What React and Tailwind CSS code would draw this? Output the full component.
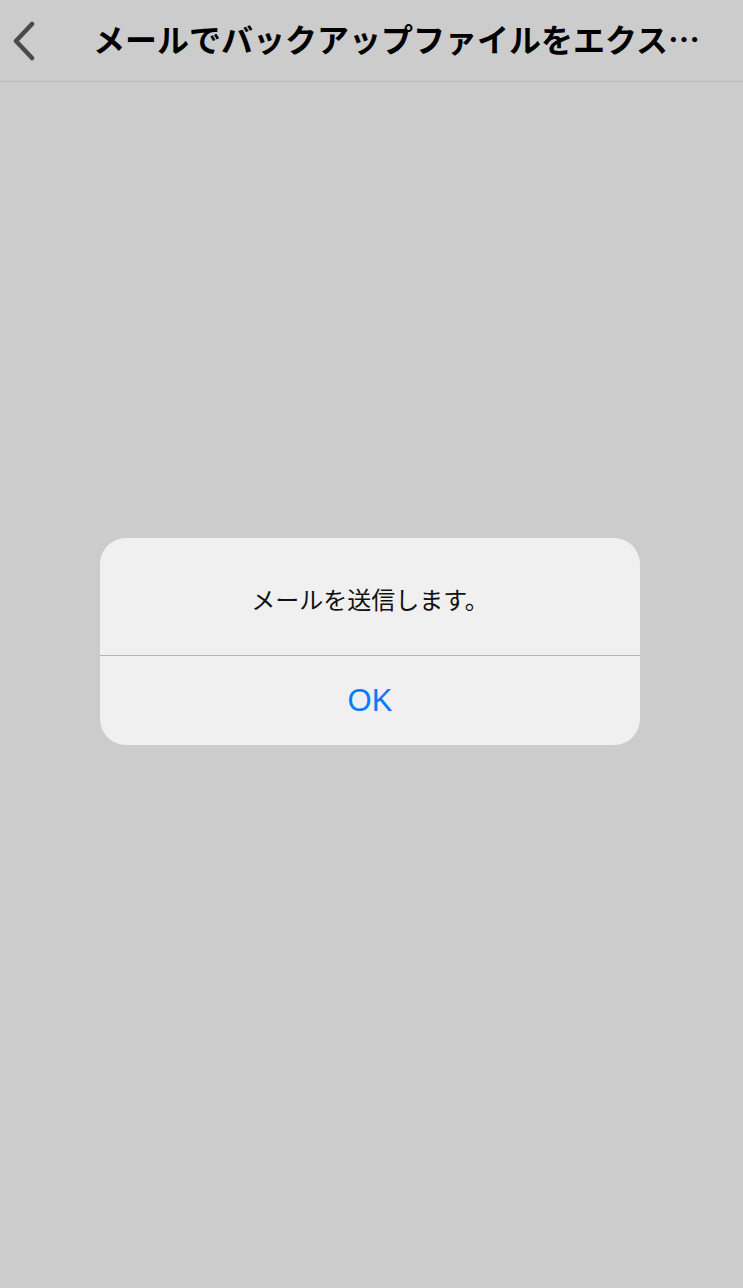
import React from "react";

export default function App() {
  return (
    <div
      className="relative w-[743px] h-[1288px] bg-[#cccccc] overflow-hidden"
      style={{ fontFamily: '"Noto Sans CJK JP", "Noto Sans", sans-serif' }}
    >
      <header className="h-[82px] border-b border-[#b9b9b9] flex items-center relative">
        <div className="w-[60px] h-full flex items-center pl-[10px]">
          <svg width="28" height="40" viewBox="0 0 28 40" fill="none">
            <path d="M22 3 L6 20 L22 37" stroke="#4a4a4a" strokeWidth="4.5" strokeLinecap="round" strokeLinejoin="round" />
          </svg>
        </div>
        <div className="flex-1 pr-[10px] pb-[6px] flex justify-center">
          <h1 className="text-[32px] font-bold text-black leading-none whitespace-nowrap">
            メールでバックアップファイルをエクス…
          </h1>
        </div>
      </header>

      <div className="absolute inset-0 flex items-center justify-center pb-[5px] pr-[3px]">
        <div className="w-[540px] h-[207px] bg-[#f0f0f0] rounded-[26px] flex flex-col overflow-hidden">
          <div className="h-[118px] flex items-center justify-center border-b border-[#b3b3b3]">
            <p className="text-[24px] text-[#111] leading-none mt-[4px]">メールを送信します。</p>
          </div>
          <div className="flex-1 flex items-center justify-center">
            <span
              className="text-[31px] text-[#0a7aff] leading-none"
              style={{ fontFamily: '"Liberation Sans", Arial, sans-serif' }}
            >
              OK
            </span>
          </div>
        </div>
      </div>
    </div>
  );
}
